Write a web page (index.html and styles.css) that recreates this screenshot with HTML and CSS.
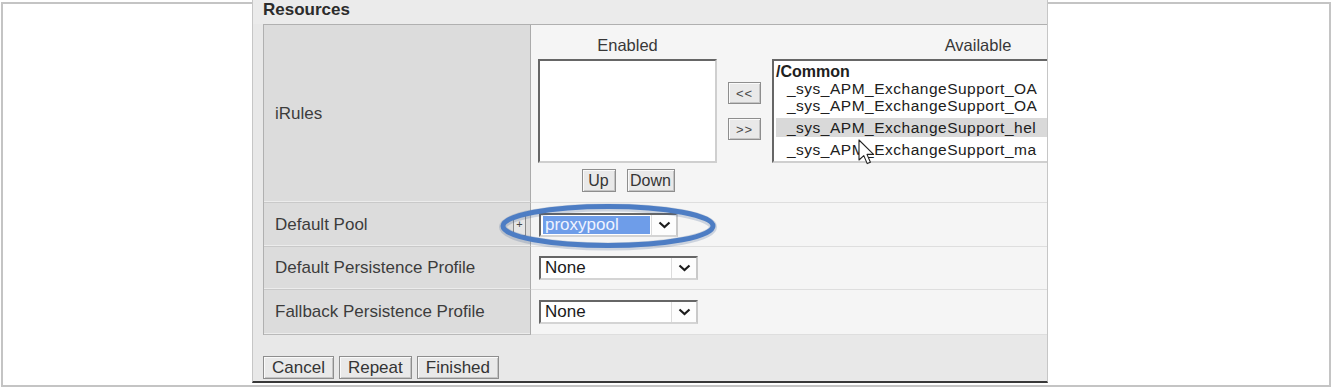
FILE: index.html
```html
<!DOCTYPE html>
<html lang="en">

<head>
    <meta charset="UTF-8">
    <meta name="viewport" content="width=device-width, initial-scale=1.0">
    <title>Resources</title>
    <link rel="stylesheet" href="styles.css">
</head>

<body>
    <div class="frame">
        <div class="shot">
            <div class="section-title">Resources</div>
            <div class="props">
                <div class="prop-label">iRules</div>
                <div class="prop-value irules">
                    <div class="picker">
                        <div class="picker-title">Enabled</div>
                        <div class="listbox"></div>
                        <div class="picker-actions">
                            <span class="btn btn-sm btn-up">Up</span>
                            <span class="btn btn-sm btn-down">Down</span>
                        </div>
                    </div>
                    <div class="movers">
                        <span class="btn btn-move">&lt;&lt;</span>
                        <span class="btn btn-move">&gt;&gt;</span>
                    </div>
                    <div class="picker picker-available">
                        <div class="picker-title">Available</div>
                        <div class="listbox listbox-available">
                            <div class="opt opt-group">/Common</div>
                            <div class="opt">_sys_APM_ExchangeSupport_OA</div>
                            <div class="opt">_sys_APM_ExchangeSupport_OA</div>
                            <div class="opt opt-selected">_sys_APM_ExchangeSupport_hel</div>
                            <div class="opt opt-last">_sys_APM_ExchangeSupport_ma</div>
                        </div>
                    </div>
                </div>

                <div class="prop-label prop-label-add">
                    <span>Default Pool</span>
                    <span class="add-btn">+</span>
                </div>
                <div class="prop-value">
                    <div class="select select-pool">
                        <span class="select-text select-text-active">proxypool</span>
                        <span class="select-arrow">
                            <svg width="13" height="8" viewBox="0 0 13 8"><polyline points="1.5,1.5 6.5,6 11.5,1.5" fill="none" stroke="#1c1c1c" stroke-width="2.2"/></svg>
                        </span>
                    </div>
                </div>

                <div class="prop-label">Default Persistence Profile</div>
                <div class="prop-value">
                    <div class="select">
                        <span class="select-text">None</span>
                        <span class="select-arrow">
                            <svg width="13" height="8" viewBox="0 0 13 8"><polyline points="1.5,1.5 6.5,6 11.5,1.5" fill="none" stroke="#1c1c1c" stroke-width="2.2"/></svg>
                        </span>
                    </div>
                </div>

                <div class="prop-label prop-label-last">Fallback Persistence Profile</div>
                <div class="prop-value prop-value-last">
                    <div class="select">
                        <span class="select-text">None</span>
                        <span class="select-arrow">
                            <svg width="13" height="8" viewBox="0 0 13 8"><polyline points="1.5,1.5 6.5,6 11.5,1.5" fill="none" stroke="#1c1c1c" stroke-width="2.2"/></svg>
                        </span>
                    </div>
                </div>
            </div>
            <div class="form-actions">
                <span class="btn">Cancel</span>
                <span class="btn">Repeat</span>
                <span class="btn">Finished</span>
            </div>

            <!-- annotation ring drawn over the pool field -->
            <svg class="ring" width="220" height="48" viewBox="0 0 220 48">
                <ellipse cx="110" cy="24" rx="105" ry="19.5" fill="none" stroke="rgba(60,90,140,.22)" stroke-width="8"/>
                <ellipse cx="110" cy="23" rx="105" ry="19.5" fill="none" stroke="#4d7dc4" stroke-width="5"/>
            </svg>
            <!-- mouse pointer -->
            <svg class="cursor" width="20" height="28" viewBox="0 0 20 28">
                <path d="M1 1 L1 21 L5.8 16.6 L9.2 24.6 L12.4 23.2 L9 15.4 L15.6 15.4 Z" fill="#fff" stroke="#222" stroke-width="1.1" stroke-linejoin="round"/>
            </svg>
        </div>
    </div>
</body>

</html>
```

FILE: styles.css
```css
* {
    margin: 0;
    padding: 0;
    box-sizing: border-box;
}

body {
    background: #fff;
    font-family: "Liberation Sans", Arial, sans-serif;
    color: #363636;
}

.frame {
    width: 1330px;
    height: 385px;
    margin: 2px 0 0 1px;
    border: 2px solid #c4c4c4;
    display: flex;
    align-items: flex-start;
}

.shot {
    position: relative;
    width: 796px;
    height: 383px;
    margin: -4px 0 0 249px;
    background: #e8e8e8;
    border-left: 1px solid #c6c6c6;
    border-right: 1px solid #c6c6c6;
    border-bottom: 2px solid #3a3a3a;
}

.section-title {
    height: 24px;
    padding-left: 10px;
    font-size: 17px;
    font-weight: bold;
    line-height: 19px;
    color: #2c2c2c;
    background: #ebebeb;
}

.props {
    margin-left: 10px;
    display: grid;
    grid-template-columns: 267px 1fr;
    grid-template-rows: 178px 44px 43px 45px;
    border-top: 1px solid #b0b0b0;
    border-left: 1px solid #b0b0b0;
}

.prop-label {
    display: flex;
    align-items: center;
    padding-left: 11px;
    font-size: 17px;
    color: #3c3c3c;
    background: #dcdcdc;
    border-right: 1px solid #ababab;
    border-bottom: 1px solid #c9c9c9;
    box-shadow: inset 0 -1px #ececec;
}

.prop-label-add {
    justify-content: space-between;
    padding-right: 4px;
}

.prop-label-last,
.prop-value-last {
    border-bottom: 1px solid #b9b9b9;
}

.prop-value {
    display: flex;
    align-items: center;
    padding-left: 8px;
    background: #f5f5f5;
    border-bottom: 1px solid #dedede;
    overflow: hidden;
}

.add-btn {
    width: 13px;
    height: 21px;
    margin-top: 2px;
    border: 1px solid #8a8a8a;
    background: #e6e6e6;
    font-size: 11px;
    line-height: 17px;
    text-align: center;
    color: #444;
}

/* iRules picker */
.irules {
    align-items: flex-start;
    padding: 10px 0 0 7px;
}

.picker {
    width: 179px;
    flex-shrink: 0;
}

.picker-available {
    width: 412px;
    margin-left: 11px;
}

.picker-title {
    height: 24px;
    font-size: 16.5px;
    line-height: 21px;
    text-align: center;
    color: #383838;
}

.listbox {
    height: 104px;
    background: #fff;
    border: 2px solid;
    border-color: #666 #cfcfcf #cfcfcf #666;
    overflow: hidden;
}

.listbox-available {
    padding: 2px 0 0 2px;
    font-size: 15.5px;
    letter-spacing: 0.5px;
    color: #202020;
    white-space: nowrap;
}

.opt {
    height: 17px;
    line-height: 17px;
    padding-left: 11px;
}

.opt-group {
    padding-left: 0;
    font-size: 16px;
    letter-spacing: 0;
    font-weight: bold;
}

.opt-selected {
    margin-top: 4px;
    height: 19px;
    line-height: 19px;
    background: #d9d9d9;
}

.opt-last {
    margin-top: 3px;
    height: 19px;
    line-height: 19px;
}

.picker-actions {
    display: flex;
    justify-content: center;
    gap: 11px;
    margin-top: 6px;
    padding-left: 1px;
}

.movers {
    width: 33px;
    margin: 47px 0 0 11px;
    display: flex;
    flex-direction: column;
    gap: 14px;
    flex-shrink: 0;
}

/* buttons */
.btn {
    display: inline-flex;
    align-items: center;
    justify-content: center;
    height: 23px;
    padding: 0 8px;
    border: 1px solid #8e8e8e;
    background: #e9e9e9;
    box-shadow: inset 1px 1px #fafafa, inset -1px -1px #c4c4c4;
    font-size: 17px;
    color: #353535;
}

.btn-sm {
    font-size: 16px;
    padding: 0;
}

.btn-up {
    width: 34px;
}

.btn-down {
    width: 48px;
}

.btn-move {
    width: 33px;
    height: 22px;
    padding: 0;
    font-size: 13px;
    letter-spacing: 1px;
    color: #4a4a4a;
}

.form-actions {
    display: flex;
    gap: 5px;
    padding: 21px 0 0 10px;
}

/* selects */
.select {
    display: flex;
    width: 159px;
    height: 24px;
    background: #fff;
    border: 2px solid;
    border-color: #666 #c9c9c9 #d4d4d4 #666;
}

.select-pool {
    width: 139px;
}

.select-text {
    flex: 1;
    padding-left: 4px;
    font-size: 17px;
    line-height: 20px;
    color: #1a1a1a;
}

.select-text-active {
    margin: 1px 1px 1px 2px;
    padding-left: 2px;
    line-height: 18px;
    background: #6e9de9;
    color: #eef3ff;
}

.select-arrow {
    width: 25px;
    display: flex;
    align-items: center;
    justify-content: center;
    border-left: 1px solid #dcdcdc;
    background: #fdfdfd;
}

/* overlays */
.ring {
    position: absolute;
    left: 245px;
    top: 203px;
}

.cursor {
    position: absolute;
    left: 605px;
    top: 139px;
}
```
